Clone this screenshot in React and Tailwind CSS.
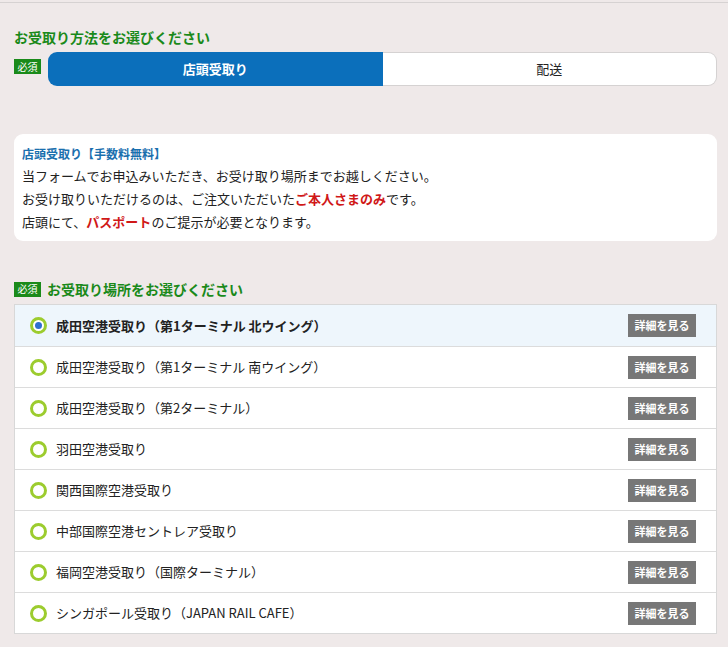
const font = { fontFamily: '"Noto Sans CJK JP", "Liberation Sans", sans-serif' }

const places = [
  '成田空港受取り（第1ターミナル 北ウイング）',
  '成田空港受取り（第1ターミナル 南ウイング）',
  '成田空港受取り（第2ターミナル）',
  '羽田空港受取り',
  '関西国際空港受取り',
  '中部国際空港セントレア受取り',
  '福岡空港受取り（国際ターミナル）',
  'シンガポール受取り（JAPAN RAIL CAFE）',
]

function Badge() {
  return (
    <span className="flex h-[15px] w-[27px] shrink-0 items-center justify-center bg-[#1a8a1a] text-[10px] leading-none text-white">
      必須
    </span>
  )
}

function Radio({ checked }) {
  return (
    <span className="flex h-[17px] w-[17px] shrink-0 items-center justify-center rounded-full border-[3px] border-[#9ccc2e] bg-white">
      {checked && <span className="h-[7px] w-[7px] rounded-full bg-[#2f6fd0]" />}
    </span>
  )
}

export default function App() {
  return (
    <div style={font} className="min-h-[647px] w-[728px] bg-[#efe9e9]">
      <div className="h-[2px]" />
      <div className="h-px bg-[#d6d2d2]" />
      <div className="pl-[14px] pr-[11px] pt-[25px]">
        <h2 className="text-[14px] font-bold leading-[18px] text-[#1a8a1a]">お受取り方法をお選びください</h2>
        <div className="mt-[6px] flex items-center gap-[7px]">
          <div className="self-start pt-[7px]">
            <Badge />
          </div>
          <div className="flex h-[34px] flex-1">
            <div className="flex w-1/2 items-center justify-center rounded-l-[9px] bg-[#0b6fbb] text-[13px] font-bold text-white">
              店頭受取り
            </div>
            <div className="flex w-1/2 items-center justify-center rounded-r-[9px] border border-l-0 border-[#d5d2d2] bg-white text-[13px] text-[#222]">
              配送
            </div>
          </div>
        </div>

        <div className="mt-[48px] rounded-[9px] bg-white px-[8px] pb-[8px] pt-[10px]">
          <p className="text-[12px] font-bold leading-[20px] text-[#1a6fae]">店頭受取り【手数料無料】</p>
          <p className="text-[13px] leading-[23px] text-[#222]">当フォームでお申込みいただき、お受け取り場所までお越しください。</p>
          <p className="text-[13px] leading-[23px] text-[#222]">
            お受け取りいただけるのは、ご注文いただいた<span className="font-bold text-[#d01818]">ご本人さまのみ</span>です。
          </p>
          <p className="text-[13px] leading-[23px] text-[#222]">
            店頭にて、<span className="font-bold text-[#d01818]">パスポート</span>のご提示が必要となります。
          </p>
        </div>

        <div className="mt-[39px] flex items-center gap-[6px]">
          <Badge />
          <h2 className="text-[14px] font-bold leading-[18px] text-[#1a8a1a]">お受取り場所をお選びください</h2>
        </div>

        <ul className="mt-[6px] border border-[#d8d8d8] bg-white">
          {places.map((p, i) => (
            <li
              key={p}
              className={`flex h-[41px] items-center border-[#dcdcdc] pl-[15px] pr-[20px] ${i > 0 ? 'border-t' : ''} ${i === 0 ? 'bg-[#eef6fc]' : ''}`}
            >
              <Radio checked={i === 0} />
              <span className={`ml-[9px] flex-1 text-[13px] text-[#222] ${i === 0 ? 'font-bold' : ''}`}>{p}</span>
              <span className="flex h-[23px] w-[68px] items-center justify-center bg-[#777] text-[11px] font-bold text-white">
                詳細を見る
              </span>
            </li>
          ))}
        </ul>
      </div>
    </div>
  )
}
